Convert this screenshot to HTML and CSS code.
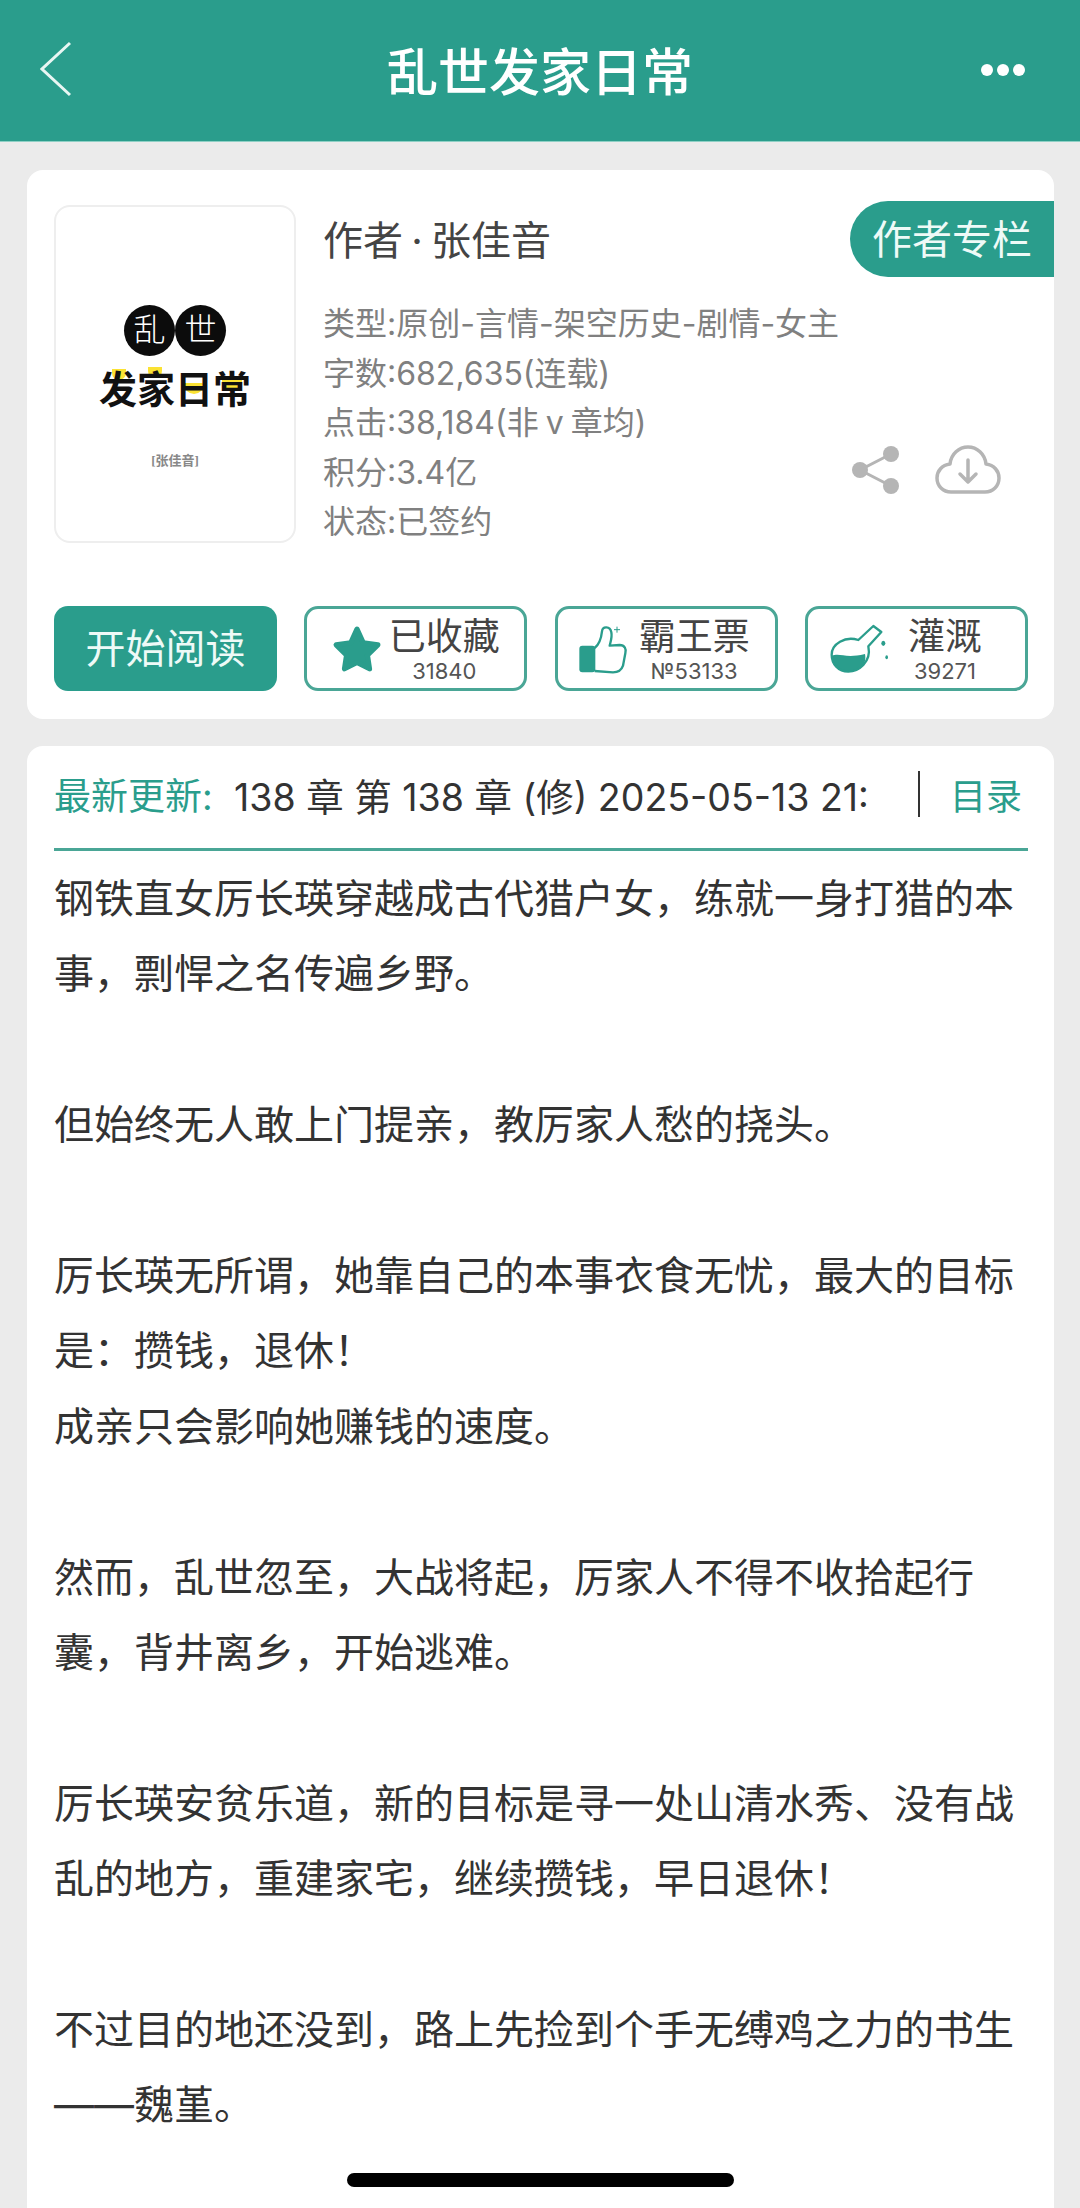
FILE: index.html
```html
<!DOCTYPE html>
<html lang="zh-CN">

<head>
    <meta charset="UTF-8">
    <meta name="viewport" content="width=device-width, initial-scale=1.0">
    <title>乱世发家日常</title>
    <link rel="stylesheet" href="styles.css">
</head>

<body>
    <header class="topbar">
        <svg class="back" width="32" height="56" viewBox="0 0 32 56">
            <path d="M30 2 L2 28 L30 54" />
        </svg>
        <h1>乱世发家日常</h1>
        <div class="more"><i></i><i></i><i></i></div>
    </header>

    <main class="page">
        <section class="card book">
            <a class="badge">作者专栏</a>
            <div class="book-top">
                <div class="cover">
                    <div class="cover-circles"><span>乱</span><span>世</span></div>
                    <div class="cover-title"><span class="dot-a">发</span><span class="dot-b">家</span><span class="dot-c">日</span><span class="dot-d">常</span></div>
                    <div class="cover-author">[张佳音]</div>
                </div>
                <div class="info">
                    <div class="author">作者 · 张佳音</div>
                    <div class="info-body">
                        <ul class="meta">
                            <li>类型:原创-言情-架空历史-剧情-女主</li>
                            <li>字数:682,635(连载)</li>
                            <li>点击:38,184(非 v 章均)</li>
                            <li>积分:3.4亿</li>
                            <li>状态:已签约</li>
                        </ul>
                        <div class="tools">
                            <svg width="50" height="50" viewBox="0 0 50 50">
                                <path class="share-line" d="M40 9 L9 25 L40 41" />
                                <circle class="share-dot" cx="9" cy="25" r="8" />
                                <circle class="share-dot" cx="40" cy="9" r="8" />
                                <circle class="share-dot" cx="40" cy="41" r="8" />
                            </svg>
                            <svg width="66" height="50" viewBox="0 0 66 50">
                                <path class="cloud" d="M16 47 H50 C58 47 64 41 64 33 C64 26 59 20 51 19 C50 9 42 2 33 2 C24 2 16 9 15 19 C7 20 2 26 2 33 C2 41 8 47 16 47 Z" />
                                <path class="cloud" d="M33 15 V36 M25 29 L33 37 L41 29" />
                            </svg>
                        </div>
                    </div>
                </div>
            </div>

            <div class="actions">
                <button class="read">开始阅读</button>
                <button class="stat">
                    <svg width="50" height="50" viewBox="0 0 48 48">
                        <path class="star" d="M24 5 L30 18 L44 20 L34 30 L36 43 L24 37 L12 43 L14 30 L4 20 L18 18 Z" />
                    </svg>
                    <span class="stat-text"><b>已收藏</b><small>31840</small></span>
                </button>
                <button class="stat stat-vote">
                    <svg width="50" height="50" viewBox="110 100 150 150">
                        <rect class="fill" x="114" y="165" width="48" height="80" rx="9" />
                        <path class="line" d="M160 172 C175 160 180 140 182 122 C184 106 206 106 210 125 C213 140 208 152 205 165 L235 163 C250 163 256 175 252 188 L245 225 C240 240 230 245 215 245 L160 241" />
                        <path class="line thin" d="M227 108 V126 M218 117 H236" />
                    </svg>
                    <span class="stat-text"><b>霸王票</b><small>№53133</small></span>
                </button>
                <button class="stat stat-water">
                    <svg width="60" height="50" viewBox="870 100 180 150">
                        <path class="fill" d="M875 196 C900 185 915 205 975 190 C982 225 955 243 925 243 C895 243 875 222 875 196 Z" />
                        <path class="line" d="M955 148 L1000 106 L1024 124 L985 167 C995 215 955 243 925 243 C895 243 875 220 875 192 C875 160 915 135 955 148 Z" />
                        <ellipse class="fill" cx="1030" cy="158" rx="6" ry="8" />
                        <ellipse class="fill" cx="1040" cy="200" rx="4" ry="6" />
                    </svg>
                    <span class="stat-text"><b>灌溉</b><small>39271</small></span>
                </button>
            </div>
        </section>

        <section class="card intro">
            <div class="update">
                <span class="update-label">最新更新:</span>
                <div class="update-scroll">138 章 第 138 章 (修) 2025-05-13 21:</div>
                <a class="toc">目录</a>
            </div>
            <div class="summary">
                <p>钢铁直女厉长瑛穿越成古代猎户女，练就一身打猎的本事，剽悍之名传遍乡野。</p>
                <p>但始终无人敢上门提亲，教厉家人愁的挠头。</p>
                <p>厉长瑛无所谓，她靠自己的本事衣食无忧，最大的目标是：攒钱，退休！<br>成亲只会影响她赚钱的速度。</p>
                <p>然而，乱世忽至，大战将起，厉家人不得不收拾起行囊，背井离乡，开始逃难。</p>
                <p>厉长瑛安贫乐道，新的目标是寻一处山清水秀、没有战乱的地方，重建家宅，继续攒钱，早日退休！</p>
                <p>不过目的地还没到，路上先捡到个手无缚鸡之力的书生——魏堇。</p>
            </div>
        </section>
    </main>

    <div class="home-bar"></div>
</body>

</html>
```

FILE: styles.css
```css
* {
    box-sizing: border-box;
}

html,
body {
    margin: 0;
    padding: 0;
}

body {
    position: relative;
    width: 1080px;
    height: 2208px;
    overflow: hidden;
    background: #ebebeb;
    color: #333;
    font-family: Inter, "Noto Sans CJK SC", sans-serif;
}

/* top bar */
.topbar {
    display: grid;
    grid-template-columns: 1fr auto 1fr;
    align-items: center;
    height: 142px;
    padding: 0 40px 4px;
    background: #2a9d8c;
    border-bottom: 1px solid #8fd0c5;
}

.back {
    fill: none;
    stroke: #e8f6f3;
    stroke-width: 3;
}

.topbar h1 {
    margin: 0;
    color: #fff;
    font-size: 51px;
    font-weight: 500;
}

.more {
    display: flex;
    justify-content: flex-end;
    gap: 4px;
    padding-top: 2px;
    padding-right: 15px;
}

.more i {
    width: 12px;
    height: 12px;
    border-radius: 50%;
    background: #fff;
}

/* cards */
.page {
    padding: 28px 26px 0 27px;
}

.card {
    position: relative;
    background: #fff;
    border-radius: 16px;
}

.book {
    height: 549px;
    margin-bottom: 27px;
    padding: 35px 26px 0 27px;
}

.badge {
    position: absolute;
    top: 31px;
    right: 0;
    width: 204px;
    height: 76px;
    border-radius: 38px 0 0 38px;
    background: #2a9d8c;
    color: #eefaf7;
    font-size: 40px;
    line-height: 78px;
    text-align: center;
}

.book-top {
    display: flex;
    gap: 27px;
    height: 338px;
}

.cover {
    flex: none;
    width: 242px;
    height: 338px;
    padding-top: 98px;
    border: 2px solid #eeeeee;
    border-radius: 16px;
    text-align: center;
}

.cover-circles {
    display: flex;
    justify-content: center;
}

.cover-circles span {
    width: 51px;
    height: 51px;
    border-radius: 50%;
    background: #0c0c0c;
    color: #fff;
    font-size: 32px;
    font-weight: 300;
    line-height: 49px;
}

.cover-title {
    display: flex;
    justify-content: center;
    margin-top: 10px;
    color: #111;
    font-size: 38px;
    font-weight: 700;
    line-height: 46px;
}

.cover-title span {
    position: relative;
    z-index: 0;
}

/* yellow blobs behind the cover title */
.cover-title span::before {
    content: "";
    position: absolute;
    z-index: -1;
    width: 14px;
    height: 11px;
    border-radius: 0 0 10px 10px;
    background: #fbe233;
}

.dot-a::before {
    top: 3px;
    left: 13px;
}

.dot-b::before {
    top: 1px;
    left: 11px;
}

.cover-title .dot-c::before {
    top: 17px;
    left: 9px;
    width: 20px;
}

.cover-title .dot-d::before {
    top: 14px;
    left: 9px;
    width: 20px;
}

.cover-author {
    margin-top: 38px;
    color: #888;
    font-family: "Liberation Serif", "Noto Sans CJK SC", serif;
    font-size: 13px;
    font-weight: 700;
}

.info {
    flex: 1;
}

.author {
    margin-top: 11px;
    color: #444;
    font-size: 40px;
    line-height: 50px;
    word-spacing: -3px;
}

.info-body {
    display: flex;
    align-items: flex-end;
    margin-top: 33px;
}

.meta {
    flex: none;
    width: 523px;
    margin: 0;
    padding: 0;
    list-style: none;
    color: #808080;
    font-size: 32px;
    line-height: 49.5px;
    white-space: nowrap;
    word-spacing: -2px;
}

.tools {
    display: flex;
    gap: 34px;
    align-items: center;
    margin-bottom: 52px;
    margin-left: 5px;
}

.share-line {
    fill: none;
    stroke: #b5b5b5;
    stroke-width: 3;
}

.share-dot {
    fill: #b5b5b5;
}

.cloud {
    fill: none;
    stroke: #b5b5b5;
    stroke-width: 3.5;
    stroke-linecap: round;
    stroke-linejoin: round;
}

/* buttons */
.actions {
    display: flex;
    justify-content: space-between;
    margin-top: 63px;
}

.actions button {
    display: flex;
    align-items: center;
    justify-content: center;
    width: 223px;
    height: 85px;
    padding: 0;
    font-family: inherit;
    border-radius: 14px;
}

.read {
    border: none;
    background: #2a9d8c;
    color: #eefaf7;
    font-size: 40px;
    line-height: 80px;
}

.stat {
    gap: 7px;
    border: 3px solid #4aa696;
    background: #fff;
    color: #444;
}

.actions .stat-vote {
    gap: 11px;
    padding-right: 5px;
}

.actions .stat-water {
    gap: 18px;
    padding-right: 21px;
}

.stat-text {
    display: flex;
    flex-direction: column;
    align-items: center;
}

.stat-text b {
    font-size: 37px;
    font-weight: 400;
    line-height: 44px;
}

.stat-text small {
    color: #555;
    font-size: 22px;
    line-height: 24px;
}

.star {
    fill: #2a9d8c;
    stroke: #2a9d8c;
    stroke-width: 5;
    stroke-linejoin: round;
}

.fill {
    fill: #2a9d8c;
}

.line {
    fill: none;
    stroke: #2a9d8c;
    stroke-width: 7;
    stroke-linejoin: round;
}

.thin {
    stroke-width: 3;
}

/* intro */
.intro {
    height: 1600px;
    padding: 0 26px 0 27px;
}

.update {
    display: flex;
    align-items: center;
    height: 105px;
    padding-bottom: 6px;
    border-bottom: 3px solid #4aa696;
    font-size: 37px;
}

.update-label {
    flex: none;
    width: 180px;
    color: #2a9d8c;
    white-space: nowrap;
}

.update-scroll {
    flex: none;
    width: 634px;
    overflow: hidden;
    color: #333;
    font-size: 37.5px;
    white-space: nowrap;
}

.toc {
    flex: none;
    height: 46px;
    margin-left: 50px;
    padding-left: 30px;
    border-left: 2px solid #333;
    color: #2a9d8c;
    font-size: 36px;
    line-height: 52px;
    white-space: nowrap;
}

.summary {
    padding-top: 10px;
    color: #333;
    font-size: 40px;
    line-height: 75.4px;
}

.summary p {
    margin: 0 0 75.4px;
}

.home-bar {
    position: absolute;
    left: 347px;
    bottom: 21px;
    width: 387px;
    height: 14px;
    border-radius: 7px;
    background: #000;
}
```
